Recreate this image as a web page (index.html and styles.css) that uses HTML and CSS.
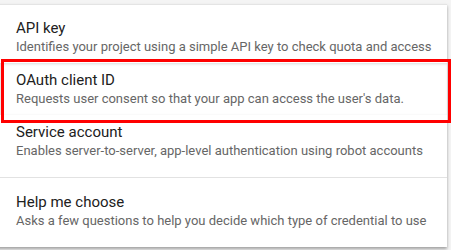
FILE: index.html
```html
<!DOCTYPE html>
<html>
<head>
<meta charset="utf-8">
<link rel="stylesheet" href="styles.css">
</head>
<body>
<div class="page">
  <div class="menu">
    <div class="item">
      <div class="title">API key</div>
      <div class="desc">Identifies your project using a simple API key to check quota and access</div>
    </div>
    <div class="item selected">
      <div class="title">OAuth client ID</div>
      <div class="desc">Requests user consent so that your app can access the user's data.</div>
    </div>
    <div class="item">
      <div class="title">Service account</div>
      <div class="desc">Enables server-to-server, app-level authentication using robot accounts</div>
    </div>
    <div class="divider"></div>
    <div class="item">
      <div class="title">Help me choose</div>
      <div class="desc">Asks a few questions to help you decide which type of credential to use</div>
    </div>
  </div>
</div>
</body>
</html>
```
FILE: styles.css
```css
html, body {
  margin: 0;
  padding: 0;
}
body {
  background: #f4f4f4;
  font-family: Roboto, "Liberation Sans", sans-serif;
  width: 451px;
  height: 250px;
  overflow: hidden;
}
.page {
  padding-top: 4px;
}
.menu {
  position: relative;
  width: 451px;
  margin-left: -4px;
  box-sizing: border-box;
  padding: 6px 0 10px 4px;
  background: #fff;
  border-top: 1px solid #e4e4e4;
  box-shadow: 0 2px 3px rgba(0,0,0,0.35);
}
.item {
  position: relative;
  padding: 7px 16px;
}
.title {
  font-size: 15px;
  line-height: 20px;
  color: #212121;
}
.desc {
  font-size: 13px;
  line-height: 18px;
  color: #666;
  white-space: nowrap;
}
.selected {
  box-shadow: inset 1px 1px 3px rgba(0,0,0,0.15);
}
.selected::after {
  content: "";
  position: absolute;
  left: 1px;
  right: -4px;
  top: -4px;
  bottom: -8px;
  border: 3px solid #f00;
}
.divider {
  height: 1px;
  background: #e2e2e2;
  margin: 10px 0 7px -4px;
}
```
